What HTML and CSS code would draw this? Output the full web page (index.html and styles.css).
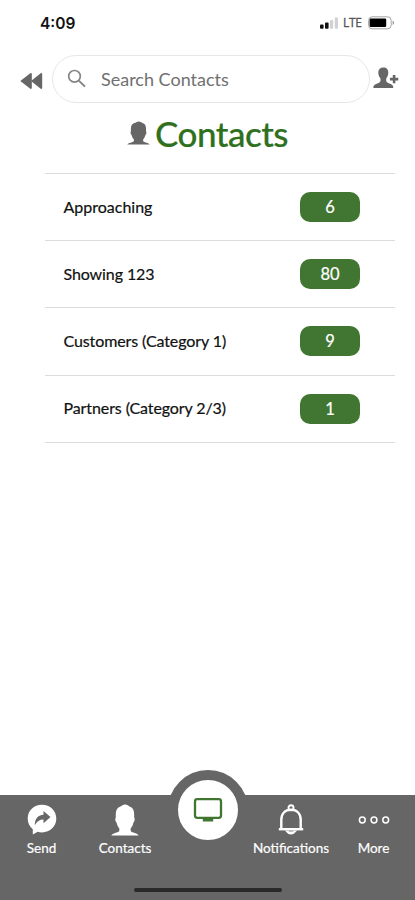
FILE: index.html
```html
<!DOCTYPE html>
<html lang="en">
<head>
<meta charset="utf-8">
<title>Contacts</title>
<link rel="stylesheet" href="styles.css">
</head>
<body>
<div class="app">
  <header class="status">
    <span class="time">4:09</span>
    <div class="signals">
      <svg class="bars" width="19" height="12" viewBox="0 0 19 12"><rect x="0" y="7.6" width="3.6" height="4.2" rx="1" fill="#111"/><rect x="5" y="5.4" width="3.6" height="6.4" rx="1" fill="#111"/><rect x="10" y="3" width="3.2" height="8.8" rx="1" fill="#d2d2d2"/><rect x="14.8" y="0.6" width="3.2" height="11.2" rx="1" fill="#d2d2d2"/></svg>
      <span class="lte">LTE</span>
      <svg class="battery" width="27" height="14" viewBox="0 0 27 14"><rect x=".6" y=".8" width="22.6" height="12" rx="3.5" fill="#fff" stroke="#a5a5a5"/><rect x="1.6" y="2.6" width="16.6" height="8.4" rx="1.2" fill="#000"/><path d="M24.6 4.6c2 .8 2 3.6 0 4.4z" fill="#999"/></svg>
    </div>
  </header>
  <div class="toolbar">
    <svg class="back" width="23" height="18" viewBox="0 0 23 18" fill="#666"><path d="M.3 9 10.300 1.200q1.500-.6 1.500 1v13.600q0 1.600-1.500 1z"/><path d="M11 9 20.700 1.200q1.500-.6 1.500 1v13.600q0 1.600-1.500 1z"/></svg>
    <div class="search">
      <svg width="20" height="20" viewBox="0 0 20 20" fill="none" stroke="#858585"><circle cx="7.500" cy="7.300" r="5.800" stroke-width="1.700"/><path d="m11.800 11.600 6.200 6" stroke-width="2"/></svg>
      <span>Search Contacts</span>
    </div>
    <svg class="add" width="26" height="22" viewBox="0 0 26 22" fill="#666"><path d="M10.300.5C13.800.5 15.300 2.600 15.300 5.500c0 2.300-.8 4.500-2.100 6v2.300c0 1.300 1.300 2 3.300 2.700 2.500.8 3.800 1.700 3.800 4.500H.3c0-2.800 1.500-3.700 4-4.500 2-.7 3.200-1.400 3.200-2.700v-2.300C6.100 10 5.300 7.800 5.300 5.500 5.300 2.600 7 .5 10.300.5z"/><path d="M19.800 8h2.600v2.800h2.900v2.600h-2.900v2.800h-2.600v-2.800h-2.900v-2.600h2.900z"/></svg>
  </div>
  <h1 class="title">
    <svg width="23" height="24" viewBox="0 0 28 30" preserveAspectRatio="none" fill="#666"><path d="M14 .5c2.300 0 3.300 1.300 5 2 3.300 1.200 4.500 3.500 4.200 10.500.8.300.6 3.600-.8 4.500-.6 2.500-1.400 4-2.700 5.200v2.500c1.500 1.800 6.800 1.700 8 4.300H.3c1.200-2.600 6.500-2.500 8-4.300v-2.500c-1.300-1.200-2.100-2.700-2.700-5.200-1.400-.9-1.600-4.200-.8-4.500C4.500 6 5.700 3.700 9 2.500 11 2 12 .5 14 .5z"/></svg>
    <span>Contacts</span>
  </h1>
  <ul class="list">
    <li><span class="name">Approaching</span><span class="badge">6</span></li>
    <li><span class="name tight">Showing 123</span><span class="badge">80</span></li>
    <li><span class="name tight">Customers (Category 1)</span><span class="badge">9</span></li>
    <li><span class="name tight">Partners (Category 2/3)</span><span class="badge">1</span></li>
  </ul>
  <nav class="tabs">
    <a class="tab send"><svg width="30" height="32" viewBox="0 0 30 32"><path d="M15 .8c8.200 0 14.300 6 14.300 13.800S23.200 28.400 15 28.400c-1.500 0-3-.2-4.300-.6L5.800 30.500v-5.200C2.500 22.800.7 19 .7 14.600.7 6.800 6.800.8 15 .8z" fill="#fff"/><path d="M16.500 7 23.500 13l-7 6.300v-3.800c-4 0-6.600 1.800-8.700 5.800 0-6.200 3-10.100 8.700-10.500z" fill="#666"/></svg><span>Send</span></a>
    <a class="tab people"><svg width="28" height="31" viewBox="0 0 28 30" preserveAspectRatio="none" fill="#fff"><path d="M14 .5c2.300 0 3.300 1.300 5 2 3.300 1.200 4.500 3.500 4.200 10.500.8.300.6 3.600-.8 4.500-.6 2.500-1.400 4-2.700 5.200v2.500c1.500 1.800 6.800 1.700 8 4.300H.3c1.200-2.600 6.500-2.500 8-4.300v-2.500c-1.300-1.200-2.100-2.700-2.700-5.200-1.400-.9-1.600-4.200-.8-4.500C4.500 6 5.700 3.700 9 2.500 11 2 12 .5 14 .5z"/></svg><span>Contacts</span></a>
    <a class="tab center"><i class="disc"><svg width="30" height="26" viewBox="0 0 30 26"><rect x="2" y="2.200" width="26" height="18.600" rx="2.200" fill="none" stroke="#417632" stroke-width="2.300"/><path d="M9.800 21h10.400v3.500H9.800z" fill="#417632"/></svg></i></a>
    <a class="tab bell"><svg width="26" height="32" viewBox="0 0 26 32" fill="none" stroke="#fff"><circle cx="13" cy="3.800" r="2.500" stroke-width="1.900"/><path d="M3.300 24.500V16C3.300 9.500 7 5.800 13 5.800S22.700 9.500 22.700 16v8.500" stroke-width="2.400"/><path d="M.8 25.200h24.400" stroke-width="2.400"/><path d="M6.500 26.500c1.500.2 2.500 4 6.500 4s5-3.800 6.500-4z" fill="#fff" stroke="none"/><path d="M10.800 27.200h4.400" stroke="#888" stroke-width=".8"/></svg><span>Notifications</span></a>
    <a class="tab more"><svg width="32" height="10" viewBox="0 0 32 10" fill="none" stroke="#fff" stroke-width="1.500"><circle cx="4.300" cy="5" r="2.900"/><circle cx="16" cy="5" r="2.900"/><circle cx="27.700" cy="5" r="2.900"/></svg><span>More</span></a>
    <i class="home"></i>
  </nav>
</div>
</body>
</html>
```
FILE: styles.css
```css
* { box-sizing: border-box; }
body { margin: 0; background: #fff; font-family: Lato, "Liberation Sans", sans-serif; color: #111; }
.app { width: 415px; height: 900px; display: flex; flex-direction: column; overflow: hidden; }
svg { display: block; flex: none; }

.status { height: 55px; flex: none; display: flex; justify-content: space-between; align-items: flex-start; padding: 14px 20px 0 40px; }
.time { font: 600 15.5px/19px Inter, sans-serif; }
.signals { display: flex; align-items: center; padding-top: 2px; }
.lte { font: 500 12px/14px "Open Sans", sans-serif; color: #555; width: 20px; margin: 0 5px 0 4px; letter-spacing: -.3px; -webkit-text-stroke: .3px #555; }

.toolbar { height: 48px; flex: none; display: flex; align-items: center; padding-left: 20px; }
.back { margin-top: 3px; }
.search { width: 318px; height: 48px; margin-left: 9px; border: 1px solid #e7e7e7; border-radius: 24px; display: flex; align-items: center; padding-left: 14px; font-size: 18px; color: #707070; }
.search span { margin-left: 14px; }
.add { margin-left: 3px; margin-top: -3px; }

.title { height: 70px; flex: none; margin: 0; display: flex; align-items: flex-start; padding-left: 127px; font-weight: 500; font-size: 35px; line-height: 44px; color: #2f7020; }
.title svg { margin-top: 18px; }
.title span { margin: 8px 0 0 5px; letter-spacing: -.5px; -webkit-text-stroke: .2px #2f7020; }

.list { list-style: none; margin: 0 20px 0 45px; padding: 0; border-top: 1px solid #dcdcdc; }
.list li { height: 67.2px; border-bottom: 1px solid #dcdcdc; display: flex; align-items: center; justify-content: space-between; padding: 0 35px 0 18.5px; }
.name { font-size: 16px; margin-bottom: 2px; -webkit-text-stroke: .2px #111; }
.tight { letter-spacing: -.1px; }
.badge { width: 60px; height: 30px; border-radius: 10px; background: #417632; color: #fff; font-size: 16.5px; line-height: 30px; text-align: center; -webkit-text-stroke: .2px #fff; }

.tabs { position: relative; height: 105px; flex: none; margin-top: auto; background: #666; color: #fff; display: grid; grid-template-columns: 83px 84px 82px 84px 82px; font-size: 13.5px; }
.tab { display: flex; flex-direction: column; align-items: center; padding-top: 9px; line-height: 16px; white-space: nowrap; }
.tab svg { height: 32px; }
.tab span { margin-top: 4px; -webkit-text-stroke: .2px #fff; }
.more { padding-right: 1px; }
.center { padding-top: 0; }
.disc { width: 80px; height: 80px; flex: none; margin-top: -25px; border: 10px solid #666; border-radius: 50%; background: #fff; display: flex; align-items: center; justify-content: center; }
.disc svg { height: 26px; }
.home { position: absolute; left: 134px; bottom: 8px; width: 148px; height: 4px; border-radius: 2px; background: #292929; }
```
